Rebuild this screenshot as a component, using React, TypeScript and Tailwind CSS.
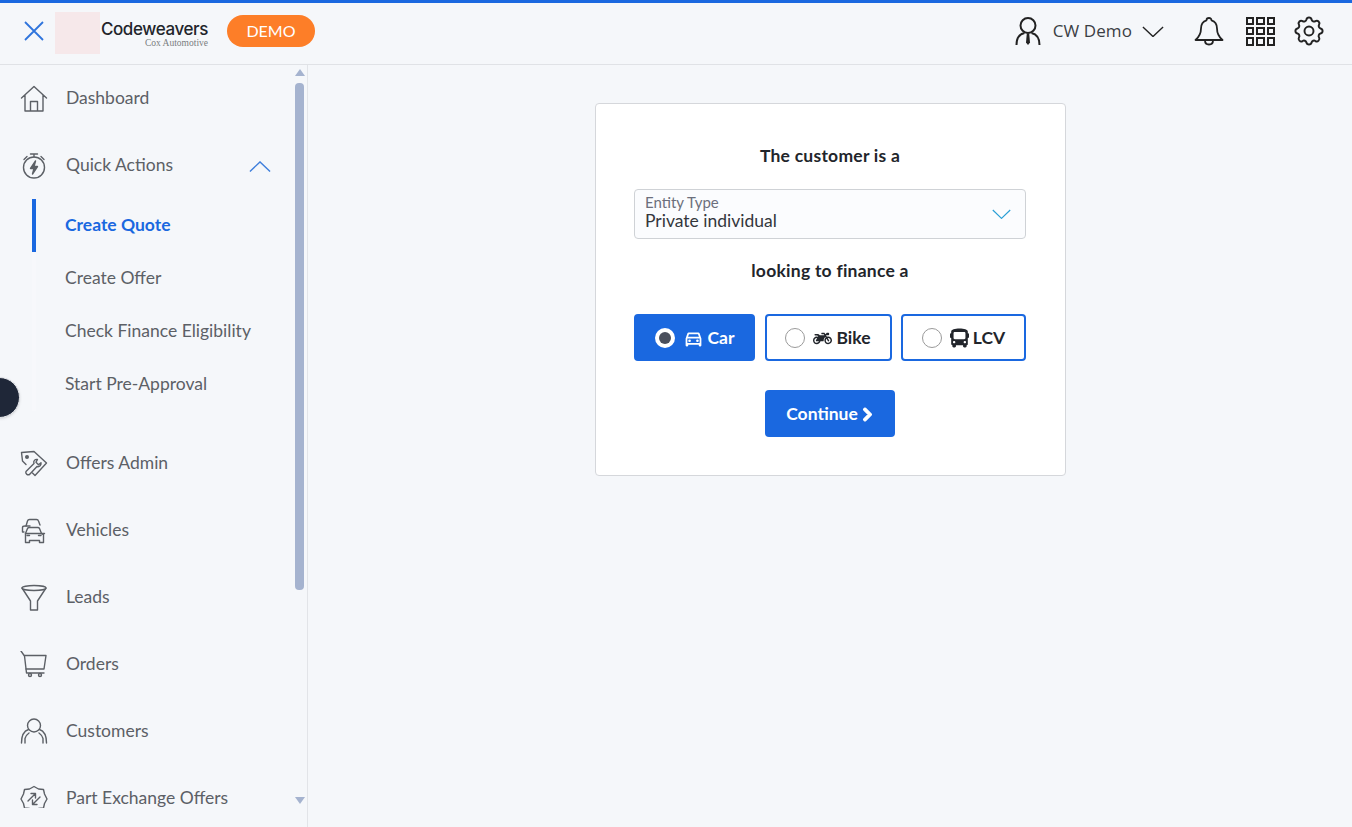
import { ReactNode } from "react";
import { FaBus, FaChevronRight, FaMotorcycle } from "react-icons/fa";
import { MdOutlineDirectionsCar } from "react-icons/md";

const FONT = "font-['Lato','Open_Sans',sans-serif]";

/* ================= ICONS ================= */

const Icon = ({ children, className = "w-7 h-7" }: { children: ReactNode; className?: string }) => (
  <svg
    viewBox="0 0 28 28"
    fill="none"
    stroke="currentColor"
    strokeWidth="1.4"
    strokeLinecap="round"
    strokeLinejoin="round"
    className={className}
  >
    {children}
  </svg>
);

const HomeIcon = () => (
  <Icon>
    <path d="M1.5 13 14 1.5 26.5 13M5 10v16h18V10M10.5 26V16.5h7V26" />
  </Icon>
);

const TimerIcon = () => (
  <Icon>
    <circle cx="14" cy="15.5" r="10.5" />
    <path d="M10.5 2h7M14 2v3M4 7.5 7 4.500M24 7.500 21 4.500" />
    <path d="M15.500 9 10.500 16.500h3.500L12.500 22l5-7.500h-3.500z" fill="currentColor" />
  </Icon>
);

const TagIcon = () => (
  <Icon>
    <path d="M1.500 2.500 14 1.500 26.500 13 15 25.500 12.500 23M1.500 2.500l1 8.500 3.500 3.500" />
    <circle cx="7" cy="7" r="1.300" fill="currentColor" />
    <path d="M17.500 9.500c-2.500-.5-4.500 1.500-3.500 4l-8 8c-1 2 1.500 4 3.500 3l7.500-8c2.500.8 4.500-1.500 4-3.800l-2.500 2-2.500-2.500z" />
  </Icon>
);

const CarsIcon = () => (
  <Icon>
    <path d="M6 9l1.500-5c.3-1 1-1.500 2-1.500h7c1 0 1.700.5 2 1.500L20 8" />
    <path d="M4 15H2.500V10.500C2.500 9.500 3.500 9 5 9h5" />
    <path d="M7 18v-3l2-5c.3-.7 1-1 1.800-1h8.400c.8 0 1.500.3 1.800 1l2 5 2 1v8h-4v-2H11v2H7z" transform="translate(-1.500 1.500)" />
    <path d="M7 18.500h2.500M18.500 18.500H21M5.500 16.500h19" />
  </Icon>
);

const FunnelIcon = () => (
  <Icon>
    <ellipse cx="14" cy="4" rx="12" ry="2.500" />
    <path d="M2 4l8.500 13v9h7v-9L26 4" />
  </Icon>
);

const CartIcon = () => (
  <Icon>
    <path d="M1 0l3.500 5 2 17h17.500" />
    <path d="M4.500 4.500H26l-2 13.500H6" />
    <circle cx="10" cy="24" r="1.500" />
    <circle cx="20" cy="24" r="1.500" />
  </Icon>
);

const PeopleIcon = () => (
  <Icon>
    <circle cx="14" cy="7.500" r="6.500" />
    <path d="M8.500 11.500C4 13 1.500 17.500 1.500 25M19.500 11.500c4.500 1.500 7 6 7 13.500" />
    <path d="M5 25v-4.500M23 25v-4.500M9 15c-1.500 1-3 2.500-4 5.500M19 15c1.500 1 3 2.500 4 5.500" />
  </Icon>
);

const BadgeSwapIcon = () => (
  <Icon>
    <path d="M14 1.500l4.500 2.500 5 .5 1 4.500L27 14l-2.500 4.500-1 4.500-5 .5-4.500 3-4.500-3-5-.5-1-4.500L1 14l2.500-5 1-4.500 5-.5z" />
    <path d="M8 16l7-7M11 8.500h4.500V13M20 12l-7 7M17 19.500h-4.500V15" />
  </Icon>
);

const Chevron = ({ up = false, className }: { up?: boolean; className: string }) => (
  <svg viewBox="0 0 24 12" fill="none" stroke="currentColor" strokeWidth="1.500" className={className}>
    <path d={up ? "M1 11.500 12 1l11 10.500" : "M1 1l11 10.500L23 1"} />
  </svg>
);

const UserIcon = () => (
  <svg viewBox="0 0 26 30" fill="none" stroke="currentColor" strokeWidth="2" className="w-[26px] h-[30px] text-[#222]">
    <circle cx="13" cy="9.500" r="7.500" />
    <path d="M1.500 29c0-7 3.500-11 8-12M24.500 29c0-7-3.500-11-8-12" />
    <path d="M11.800 17.500h2.400l.8 9-2 2.500-2-2.500z" fill="currentColor" stroke="none" />
  </svg>
);

const BellIcon = () => (
  <svg viewBox="0 0 30 30" fill="none" stroke="currentColor" strokeWidth="1.800" strokeLinejoin="round" className="w-[30px] h-[30px] text-[#222]">
    <path d="M15 2c-1.500 0-2.500 1-2.500 2.300C8.500 5.500 7 9 7 12.500c0 5-2 8.500-5.500 11.500h27C25 21 23 17.500 23 12.500c0-3.500-1.500-7-5.500-8.200C17.500 3 16.500 2 15 2z" />
    <path d="M11 24.500c0 2.500 1.800 4 4 4s4-1.500 4-4" />
  </svg>
);

const GridIcon = () => (
  <div className="grid grid-cols-3 gap-[2px] w-[29px] h-[29px]">
    {Array.from({ length: 9 }).map((_, i) => (
      <span key={i} className="border-2 border-[#222]" />
    ))}
  </div>
);

const GearIcon = () => (
  <svg viewBox="2 2 20 20" fill="none" stroke="currentColor" strokeWidth="1.300" strokeLinecap="round" strokeLinejoin="round" className="w-[30px] h-[30px] text-[#222]">
    <path d="M10.300 4.300c.4-1.800 3-1.800 3.400 0a1.700 1.700 0 0 0 2.600 1.100c1.500-.9 3.300.8 2.400 2.400a1.700 1.700 0 0 0 1 2.500c1.800.4 1.800 3 0 3.400a1.700 1.700 0 0 0-1 2.600c.9 1.500-.9 3.300-2.400 2.400a1.700 1.700 0 0 0-2.600 1c-.4 1.800-3 1.800-3.400 0a1.700 1.700 0 0 0-2.600-1c-1.500.9-3.300-.9-2.400-2.400a1.700 1.700 0 0 0-1-2.600c-1.800-.4-1.800-3 0-3.400a1.700 1.700 0 0 0 1-2.500c-.9-1.600.9-3.300 2.400-2.400 1 .6 2.300.1 2.600-1.100z" />
    <circle cx="12" cy="12" r="3" />
  </svg>
);

/* ================= SIDEBAR ================= */

const NavItem = ({ icon, label, children }: { icon: ReactNode; label: string; children?: ReactNode }) => (
  <div className="flex items-center h-[67px] pl-[20px] text-[#5c6066]">
    <span className="w-[46px] shrink-0">{icon}</span>
    <span className="text-[17.500px]">{label}</span>
    {children}
  </div>
);

const SubItem = ({ label, active = false }: { label: string; active?: boolean }) => (
  <div
    className={`flex items-center h-[53px] pl-[29px] text-[17.500px] border-l-4 ${
      active ? "border-[#1a68e0] text-[#1a68e0] font-bold" : "border-[#f7f8fb] text-[#5c6066]"
    }`}
  >
    {label}
  </div>
);

const Sidebar = () => (
  <aside className="flex w-[308px] shrink-0 border-r border-[#e2e4e8] h-[762px] overflow-hidden">
    <nav className="flex-1 min-w-0 h-[743px] overflow-hidden">
      <NavItem icon={<HomeIcon />} label="Dashboard" />
      <NavItem icon={<TimerIcon />} label="Quick Actions">
        <Chevron up className="w-[22px] h-[11px] ml-auto mr-[22px] mt-[2px] text-[#3f7fdc]" />
      </NavItem>
      <div className="ml-[32px] pb-[19px]">
        <SubItem label="Create Quote" active />
        <SubItem label="Create Offer" />
        <SubItem label="Check Finance Eligibility" />
        <SubItem label="Start Pre-Approval" />
      </div>
      <NavItem icon={<TagIcon />} label="Offers Admin" />
      <NavItem icon={<CarsIcon />} label="Vehicles" />
      <NavItem icon={<FunnelIcon />} label="Leads" />
      <NavItem icon={<CartIcon />} label="Orders" />
      <NavItem icon={<PeopleIcon />} label="Customers" />
      <NavItem icon={<BadgeSwapIcon />} label="Part Exchange Offers" />
    </nav>
    {/* scrollbar */}
    <div className="w-[13px] mr-[1px] shrink-0 flex flex-col items-center pt-[4px]">
      <span className="w-0 h-0 border-x-[5px] border-x-transparent border-b-[7px] border-b-[#a5b3cf]" />
      <span className="w-[9px] h-[507px] mt-[7px] rounded-[4px] bg-[#a5b3cf]" />
      <span className="w-0 h-0 mt-[207px] border-x-[5px] border-x-transparent border-t-[7px] border-t-[#a5b3cf]" />
    </div>
  </aside>
);

/* ================= HEADER ================= */

const Header = () => (
  <header className="flex items-center h-[65px] pl-[24px] pr-[28px] pb-[5px] border-t-[3px] border-t-[#1a68e0] border-b border-b-[#e0e2e6]">
    <svg viewBox="0 0 20 20" fill="none" stroke="#2f74dc" strokeWidth="1.800" className="w-[20px] h-[20px]">
      <path d="M1 1l18 18M19 1 1 19" />
    </svg>
    <div className="w-[45px] h-[42px] ml-[11px] mt-[3px] bg-[#f6e8ea]" />
    <div className="flex flex-col items-end w-[108px] leading-none mt-[8px]">
      <span className="font-['Inter',sans-serif] font-medium text-[17px] tracking-[-0.400px] text-[#22252b]">Codeweavers</span>
      <span className="font-['Liberation_Serif',serif] small-caps text-[9.500px] text-[#7a7d80] mt-[1px]">Cox Automotive</span>
    </div>
    <div className="flex items-center justify-center w-[88px] h-[32px] ml-[19px] rounded-full bg-[#fd7e28] text-white text-[16px]">
      DEMO
    </div>
    <div className="flex items-center ml-auto">
      <UserIcon />
      <span className="ml-[12px] font-['Open_Sans',sans-serif] text-[17px] tracking-[0.100px] text-[#3b3e44]">CW Demo</span>
      <Chevron className="w-[22px] h-[11px] ml-[10px] text-[#222]" />
      <div className="ml-[30px]"><BellIcon /></div>
      <div className="ml-[22px]"><GridIcon /></div>
      <div className="ml-[19px]"><GearIcon /></div>
    </div>
  </header>
);

/* ================= FORM CARD ================= */

const VehicleOption = ({
  label,
  icon,
  selected = false,
  className,
}: {
  label: string;
  icon: ReactNode;
  selected?: boolean;
  className: string;
}) => (
  <div
    className={`flex items-center justify-center h-[47px] pt-[1px] rounded-[4px] border-2 border-[#1a68e0] font-bold text-[17.500px] ${
      selected ? "bg-[#1a68e0] text-white" : "bg-white text-[#22252b]"
    } ${className}`}
  >
    {selected ? (
      <span className="flex items-center justify-center w-[20px] h-[20px] rounded-full bg-white">
        <span className="w-[12px] h-[12px] rounded-full bg-[#4a4f5c]" />
      </span>
    ) : (
      <span className="w-[20px] h-[20px] rounded-full bg-white border border-[#9a9a9a]" />
    )}
    <span className="ml-[8px] mr-[4px]">{icon}</span>
    {label}
  </div>
);

const QuoteCard = () => (
  <section className="w-[471px] h-[373px] mt-[38px] pl-[38px] pr-[39px] pt-[39px] rounded-[4px] border border-[#d5d7db] bg-white">
    <h2 className="text-center font-bold text-[17.500px] tracking-[0.250px] leading-[25px] text-[#22252b]">The customer is a</h2>
    <div className="flex items-center justify-between h-[50px] mt-[21px] pl-[10px] pr-[14px] rounded-[4px] border border-[#cfd2d6] bg-[#fbfcfe]">
      <div className="-mt-[3px]">
        <div className="text-[15px] leading-[15px] text-[#6c6f7c]">Entity Type</div>
        <div className="text-[17.500px] leading-[21px] text-[#33363c]">Private individual</div>
      </div>
      <Chevron className="w-[19px] h-[10px] text-[#2a9fd6]" />
    </div>
    <h2 className="text-center font-bold text-[17.500px] tracking-[0.250px] leading-[25px] mt-[19px] text-[#22252b]">looking to finance a</h2>
    <div className="flex justify-between mt-[31px]">
      <VehicleOption selected label="Car" className="w-[121px]" icon={<MdOutlineDirectionsCar className="w-[21px] h-[21px]" />} />
      <VehicleOption label="Bike" className="w-[127px]" icon={<FaMotorcycle className="w-[19px] h-[19px]" />} />
      <VehicleOption label="LCV" className="w-[125px]" icon={<FaBus className="w-[19px] h-[20px]" />} />
    </div>
    <div className="flex justify-center mt-[29px]">
      <button className="flex items-center justify-center w-[130px] h-[47px] pt-[1px] rounded-[4px] bg-[#1a68e0] text-white font-bold text-[17.500px]">
        Continue
        <FaChevronRight className="w-[13px] h-[15px] ml-[3px] stroke-[45px]" />
      </button>
    </div>
  </section>
);

export default function App() {
  return (
    <div className={`relative w-[1352px] h-[827px] overflow-hidden bg-[#f5f7fa] ${FONT}`}>
      <Header />
      <div className="flex">
        <Sidebar />
        <main className="flex-1 flex justify-center pl-[1px]">
          <QuoteCard />
        </main>
      </div>
      {/* floating launcher poking in from the left edge */}
      <div className="absolute left-[-21px] top-[377px] w-[41px] h-[41px] rounded-full bg-[#1f2738] border border-[#e6e8ec] shadow" />
    </div>
  );
}
